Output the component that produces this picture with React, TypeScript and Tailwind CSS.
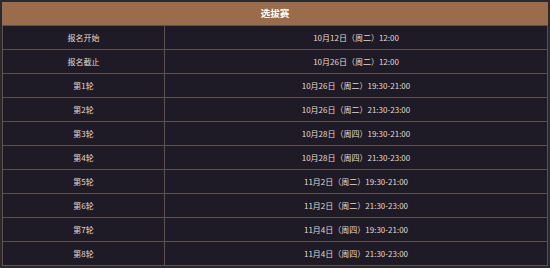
const rows = [
  ["报名开始", "10月12日（周二）12:00"],
  ["报名截止", "10月26日（周二）12:00"],
  ["第1轮", "10月26日（周二）19:30-21:00"],
  ["第2轮", "10月26日（周二）21:30-23:00"],
  ["第3轮", "10月28日（周四）19:30-21:00"],
  ["第4轮", "10月28日（周四）21:30-23:00"],
  ["第5轮", "11月2日（周二）19:30-21:00"],
  ["第6轮", "11月2日（周二）21:30-23:00"],
  ["第7轮", "11月4日（周四）19:30-21:00"],
  ["第8轮", "11月4日（周四）21:30-23:00"],
];

export default function App() {
  return (
    <div
      className="w-[550px] h-[268px] bg-[#2b292e] pt-[2px] pl-[2px]"
      style={{ fontFamily: '"Noto Sans CJK SC", "Noto Sans", sans-serif' }}
    >
      <div className="w-[546px]">
        {/* Title bar */}
        <div className="h-[24px] bg-[#9b6c4b] border-b border-[#5c514f] flex items-center justify-center">
          <span className="text-[9.5px] font-bold text-white leading-none">选拔赛</span>
        </div>

        {/* Schedule rows */}
        {rows.map(([label, time]) => (
          <div
            key={label}
            className="h-[24px] flex bg-[#1f1b26] border-l border-r border-b border-[#5c514f] text-[8px] leading-none text-[#e3d9cf]"
          >
            <div className="w-[162px] border-r border-[#5c514f] flex items-center justify-center">
              {label}
            </div>
            <div className="flex-1 flex items-center justify-center">{time}</div>
          </div>
        ))}
      </div>
    </div>
  );
}
